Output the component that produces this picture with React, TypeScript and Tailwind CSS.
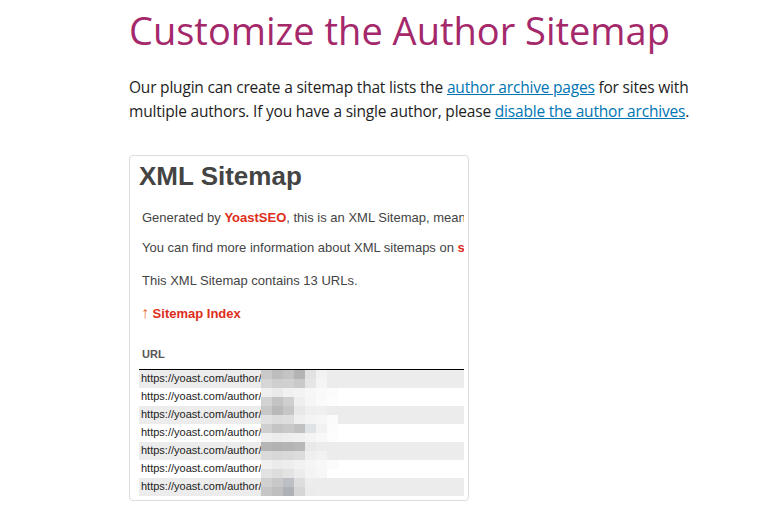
import React from "react";

// blurred-out author names, one entry per table row (top / bottom halves)
const blurRows: string[][][] = [
  [
    ["#c9c9c9", "#bdbdbd", "#c4c4c4", "#b3b3b3", "#e2e2e2", "#f2f2f2"],
    ["#d6d6d6", "#cfcfcf", "#d0d0d0", "#c9c9c9", "#e6e6e6", "#f5f5f5"],
  ],
  [
    ["#efefef", "#eaeaea", "#f1f1f1", "#f3f3f3", "#f7f7f7", "#fafafa", "#fcfcfc"],
    ["#d2d2d2", "#c3c3c3", "#cfcfcf", "#eeeeee", "#f6f6f6", "#fafafa", "#fdfdfd"],
  ],
  [
    ["#c8c8c8", "#b9b9b9", "#c6c6c6", "#e8e8e8", "#efefef", "#f0f0f0"],
    ["#e1e1e1", "#dcdcdc", "#dedede", "#efefef", "#f4f4f4", "#f6f6f6", "#fbfbfb"],
  ],
  [
    ["#cfcfcf", "#c4c4c4", "#c9c9c9", "#c1c1c1", "#dfe3e6", "#f2f2f2", "#fcfcfc"],
    ["#efefef", "#ececec", "#eeeeee", "#f0f0f0", "#f4f4f4", "#f8f8f8", "#fdfdfd"],
  ],
  [
    ["#b5b5b5", "#b2b2b2", "#b4b4b4", "#b8b8b8", "#e9e9e9", "#ececec"],
    ["#dadada", "#d7d7d7", "#d9d9d9", "#dcdcdc", "#efefef", "#f2f2f2"],
  ],
  [
    ["#f0f0f0", "#ebebeb", "#eeeeee", "#f2f2f2", "#f5f5f5", "#f8f8f8", "#fbfbfb"],
    ["#e2e2e2", "#dddddd", "#e3e3e3", "#ececec", "#f4f4f4", "#f7f7f7"],
  ],
  [
    ["#d0d0d0", "#c8c8c8", "#bcc0c4", "#dddddd", "#ededed"],
    ["#c6c6c6", "#bfbfbf", "#aeb2b6", "#d6d6d6", "#ebebeb"],
  ],
];

const Blur = ({ rows }: { rows: string[][] }) => (
  <div className="flex flex-col">
    {rows.map((cells, i) => (
      <div key={i} className="flex h-[9px]">
        {cells.map((c, j) => (
          <div key={j} className="w-[11px] h-[9px]" style={{ background: c }} />
        ))}
      </div>
    ))}
  </div>
);

const SitemapShot = () => (
  <div className="w-[340px] h-[346px] border border-[#dcdcdc] rounded-[4px] bg-white overflow-hidden">
    <div
      className="pl-[9px] pr-[4px] text-[#444]"
      style={{ fontFamily: '"Liberation Sans", Arial, sans-serif' }}
    >
      <h2 className="text-[26px] font-bold leading-none pt-[7px] text-[#444]">
        XML Sitemap
      </h2>
      <div className="text-[13px] leading-[16px] whitespace-nowrap overflow-hidden">
        <p className="mt-[21px] pl-[3px]">
          Generated by <span className="text-[#dd2d1a] font-bold">YoastSEO</span>,
          this is an XML Sitemap, meant for consumption by search engines.
        </p>
        <p className="mt-[14px] pl-[3px]">
          You can find more information about XML sitemaps on{" "}
          <span className="text-[#dd2d1a] font-bold">sitemaps.org</span>.
        </p>
        <p className="mt-[17px] pl-[3px]">
          This XML Sitemap contains 13 URLs.
        </p>
        <p className="mt-[16px] pl-[2px] font-bold text-[#dd2d1a]">
          <span className="text-[#ee6a1f] font-normal text-[16px]">↑</span> Sitemap Index
        </p>
      </div>
      <div className="mt-[24px] w-[325px]">
        <div className="text-[11px] font-bold text-[#555] pl-[3px] pb-[6px] border-b border-black">
          URL
        </div>
        {blurRows.map((rows, i) => (
          <div
            key={i}
            className={`flex items-center h-[18px] text-[11px] text-[#222] pl-[2px] ${
              i % 2 === 0 ? "bg-[#ececec]" : "bg-white"
            }`}
          >
            <span>https://yoast.com/author/</span>
            <Blur rows={rows} />
          </div>
        ))}
      </div>
    </div>
  </div>
);

const App = () => {
  return (
    <div
      className="bg-white w-[757px] h-[530px] pl-[129px] pt-[6px] text-[#333]"
      style={{ fontFamily: '"Open Sans", "Noto Sans", sans-serif' }}
    >
      <h1 className="text-[38px] leading-[48px] text-[#a4286a]">
        Customize the Author Sitemap
      </h1>
      <p className="mt-[21px] text-[15.5px] leading-[24px] text-[#1e1e1e] w-[580px] tracking-[-0.2px]">
        Our plugin can create a sitemap that lists the{" "}
        <a href="#" className="text-[#0075b3] underline">
          author archive pages
        </a>{" "}
        for sites with multiple authors. If you have a single author, please{" "}
        <a href="#" className="text-[#0075b3] underline">
          disable the author archives
        </a>
        .
      </p>
      <div className="mt-[32px]">
        <SitemapShot />
      </div>
    </div>
  );
};

export default App;
